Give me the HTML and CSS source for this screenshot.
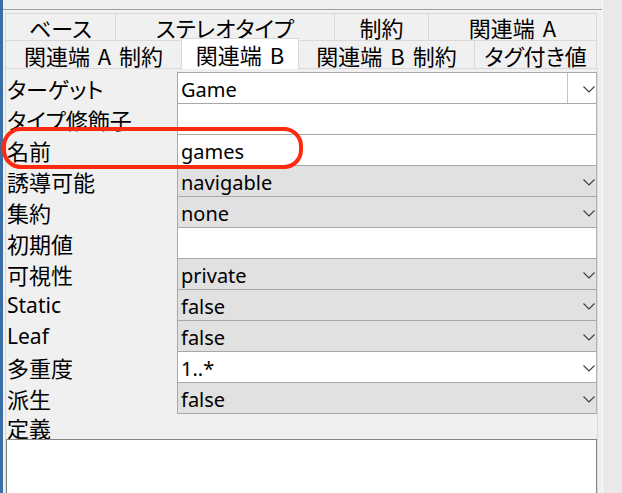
FILE: index.html
```html
<!DOCTYPE html>
<html lang="ja">
<head>
<meta charset="utf-8">
<link rel="stylesheet" href="styles.css">
</head>
<body>
<div class="window">
  <div class="accent"></div>
  <div class="main">
    <div class="frame">
      <div class="tabs">
        <div class="tabrow">
          <div class="tab w111">ベース</div>
          <div class="tab w219">ステレオタイプ</div>
          <div class="tab w94">制約</div>
          <div class="tab w168">関連端 A</div>
        </div>
        <div class="tabrow">
          <div class="tab w177">関連端 A 制約</div>
          <div class="tab w117 selected">関連端 B</div>
          <div class="tab w176">関連端 B 制約</div>
          <div class="tab w122">タグ付き値</div>
        </div>
      </div>
      <div class="content">
        <div class="grid">
          <div class="label">ターゲット</div>
          <div class="value white"><span class="text">Game</span><span class="btn"><svg class="chev" viewBox="0 0 12 7" width="12" height="7"><polyline points="0.5,0.5 6,6 11.5,0.5"/></svg></span></div>

          <div class="label">タイプ修飾子</div>
          <div class="value white"><span class="text"></span></div>

          <div class="label">名前</div>
          <div class="value white"><span class="text">games</span></div>

          <div class="label">誘導可能</div>
          <div class="value gray"><span class="text">navigable</span><svg class="chev" viewBox="0 0 12 7" width="12" height="7"><polyline points="0.5,0.5 6,6 11.5,0.5"/></svg></div>

          <div class="label">集約</div>
          <div class="value gray"><span class="text">none</span><svg class="chev" viewBox="0 0 12 7" width="12" height="7"><polyline points="0.5,0.5 6,6 11.5,0.5"/></svg></div>

          <div class="label">初期値</div>
          <div class="value white"><span class="text"></span></div>

          <div class="label">可視性</div>
          <div class="value gray"><span class="text">private</span><svg class="chev" viewBox="0 0 12 7" width="12" height="7"><polyline points="0.5,0.5 6,6 11.5,0.5"/></svg></div>

          <div class="label latin">Static</div>
          <div class="value gray"><span class="text">false</span><svg class="chev" viewBox="0 0 12 7" width="12" height="7"><polyline points="0.5,0.5 6,6 11.5,0.5"/></svg></div>

          <div class="label latin">Leaf</div>
          <div class="value gray"><span class="text">false</span><svg class="chev" viewBox="0 0 12 7" width="12" height="7"><polyline points="0.5,0.5 6,6 11.5,0.5"/></svg></div>

          <div class="label">多重度</div>
          <div class="value white"><span class="text">1..*</span><svg class="chev" viewBox="0 0 12 7" width="12" height="7"><polyline points="0.5,0.5 6,6 11.5,0.5"/></svg></div>

          <div class="label">派生</div>
          <div class="value gray"><span class="text">false</span><svg class="chev" viewBox="0 0 12 7" width="12" height="7"><polyline points="0.5,0.5 6,6 11.5,0.5"/></svg></div>
        </div>
        <div class="deflabel">定義</div>
        <div class="textarea"></div>
      </div>
    </div>
  </div>
  <div class="side"></div>
  <div class="highlight"></div>
</div>
</body>
</html>
```

FILE: styles.css
```css
html, body {
  margin: 0;
  padding: 0;
}
body {
  width: 622px;
  height: 493px;
  overflow: hidden;
  background: #f0f0f0;
  font-family: "Noto Sans", "Noto Sans CJK JP", sans-serif;
  color: #000;
}
.window {
  position: relative;
  display: flex;
  width: 622px;
  height: 493px;
  overflow: hidden;
}
.accent {
  width: 3px;
  flex: none;
  background: #3a6ea5;
}
.main {
  width: 599px;
  flex: none;
  padding-top: 9px;
  box-sizing: border-box;
}
.frame {
  border-top: 1px solid #a0a0a0;
  padding: 3px 4px 0 2px;
  height: 100%;
  box-sizing: border-box;
}
.tabs {
  display: flex;
  flex-direction: column;
}
.tabrow {
  display: flex;
  height: 27px;
}
.tabrow + .tabrow {
  height: 28px;
}
.tab {
  box-sizing: border-box;
  border-top: 1px solid #d9d9d9;
  border-right: 1px solid #d9d9d9;
  display: flex;
  align-items: center;
  justify-content: center;
  font-family: "Noto Sans CJK JP", sans-serif;
  font-feature-settings: "palt";
  font-size: 22px;
  word-spacing: 3px;
  line-height: 1;
  background: #f0f0f0;
  white-space: nowrap;
}
.tab:first-child {
  border-left: 1px solid #d9d9d9;
}
.tab.selected {
  position: relative;
  z-index: 2;
  background: #fff;
  margin-top: -2px;
  margin-bottom: -1px;
  margin-left: -1px;
  border-left: 1px solid #d9d9d9;
}
.w111 { width: 111px; }
.w219 { width: 219px; }
.w94 { width: 94px; }
.w168 { width: 168px; }
.w177 { width: 177px; }
.w117 { width: 118px; }
.w176 { width: 176px; }
.w122 { width: 122px; }

.content {
  border: 1px solid #d9d9d9;
  border-bottom: none;
  width: 593px;
  box-sizing: border-box;
  padding-top: 3px;
  height: 425px;
  display: flex;
  flex-direction: column;
}
.grid {
  display: grid;
  grid-template-columns: 171px 420px;
  grid-auto-rows: 31px;
  border-top: 1px solid #a8a8a8;
}
.label {
  font-family: "Noto Sans CJK JP", sans-serif;
  font-feature-settings: "palt";
  font-size: 22px;
  line-height: 1;
  display: flex;
  align-items: center;
  padding-left: 1px;
  box-sizing: border-box;
  background: #f0f0f0;
  white-space: nowrap;
  margin-top: -1px;
}
.label.latin {
  font-family: "Noto Sans", sans-serif;
  font-size: 21px;
}
.value {
  box-sizing: border-box;
  border-left: 1px solid #a8a8a8;
  border-right: 1px solid #b4b4b4;
  border-bottom: 1px solid #a8a8a8;
  display: flex;
  align-items: center;
  font-size: 20px;
  line-height: 1;
}
.value.white { background: #fff; }
.value.gray { background: #e1e1e1; }
.text {
  flex: 1;
  padding-left: 3px;
  padding-top: 3px;
  white-space: nowrap;
}
.chev {
  flex: none;
  margin-right: 1px;
  margin-top: 3px;
  fill: none;
  stroke: #3c3c3c;
  stroke-width: 1.1;
}
.btn {
  flex: none;
  align-self: stretch;
  width: 28px;
  border-left: 1px solid #c4c4c4;
  display: flex;
  align-items: center;
  justify-content: flex-end;
  background: #fff;
}
.deflabel {
  font-family: "Noto Sans CJK JP", sans-serif;
  font-size: 22px;
  line-height: 1;
  height: 25px;
  flex: none;
  box-sizing: border-box;
  padding-left: 1px;
  padding-top: 2px;
}
.textarea {
  width: 591px;
  flex: 1;
  box-sizing: border-box;
  border: 1px solid #858585;
  border-bottom: none;
  background: #fff;
}
.side {
  flex: 1;
  background: #e9e9e9;
  border-left: 1px solid #f8f8f8;
}
.highlight {
  position: absolute;
  left: 2px;
  top: 127px;
  width: 301px;
  height: 42px;
  box-sizing: border-box;
  border: 4px solid #ff2a10;
  border-radius: 19px;
}
```
